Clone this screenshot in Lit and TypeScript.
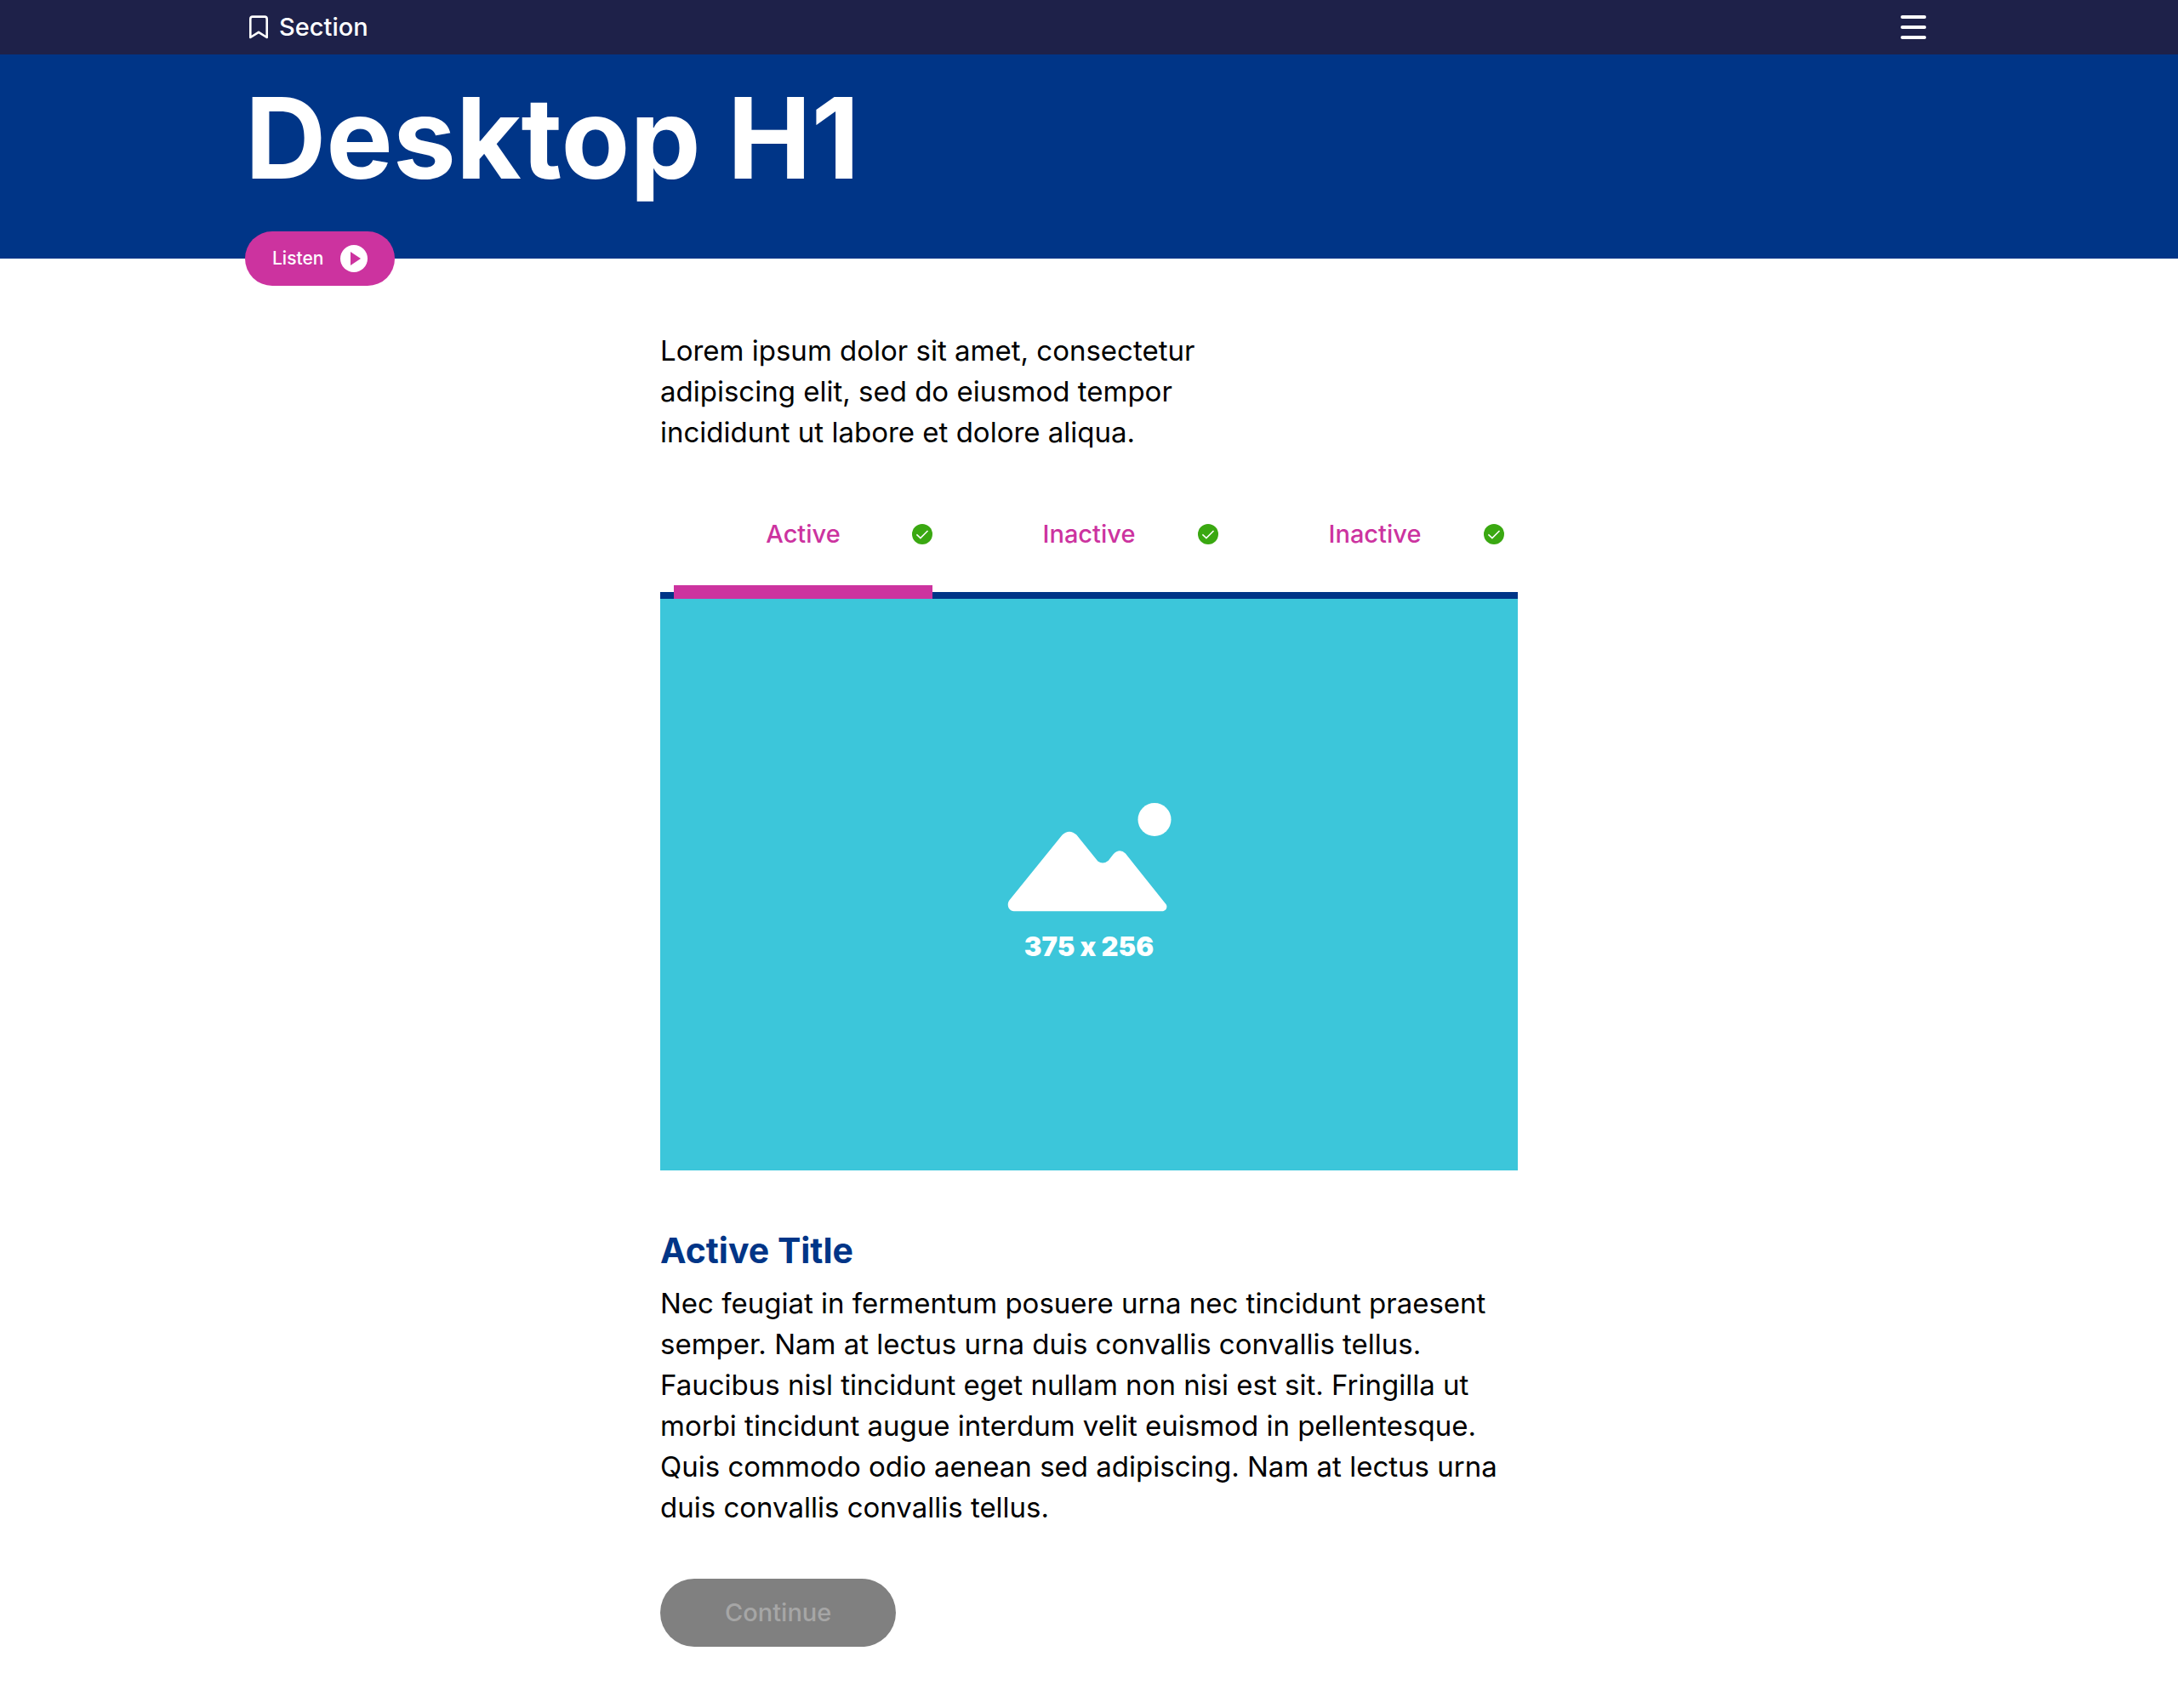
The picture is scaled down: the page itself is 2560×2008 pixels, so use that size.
import { LitElement, html, css, svg } from "lit";
import { customElement, property, state } from "lit/decorators.js";

interface TabItem {
  label: string;
  done: boolean;
}

const checkIcon = svg`
  <svg class="check" viewBox="0 0 24 24" aria-hidden="true">
    <circle cx="12" cy="12" r="12" fill="#3aa811" />
    <path d="M5.4 12.4 9.9 16.6 18.5 8" fill="none" stroke="#fff" stroke-width="1.5" />
  </svg>`;

@customElement("tab-strip")
export class TabStrip extends LitElement {
  @property({ attribute: false }) tabs: TabItem[] = [];
  @state() private selected = 0;

  static styles = css`
    :host {
      display: block;
    }
    .tabs {
      display: grid;
      grid-template-columns: repeat(3, 1fr);
      background: linear-gradient(#003587, #003587) bottom / 100% 8px no-repeat;
    }
    .tab {
      display: grid;
      grid-template-columns: 24px 1fr 24px;
      align-items: center;
      height: 136px;
      margin: 0 16px;
      padding: 0;
      border: 0;
      border-bottom: 16px solid transparent;
      background: none;
      color: #cc339f;
      font: 500 29px/40px Inter, "Liberation Sans", sans-serif;
      cursor: pointer;
    }
    .selected {
      border-bottom-color: #cc339f;
    }
    .label {
      grid-column: 2;
      text-align: center;
    }
    .check {
      display: block;
      width: 24px;
      height: 24px;
    }
  `;

  render() {
    return html`
      <div class="tabs" role="tablist">
        ${this.tabs.map(
          (tab, i) => html`
            <button
              class="tab ${i === this.selected ? "selected" : ""}"
              role="tab"
              aria-selected=${i === this.selected ? "true" : "false"}
              @click=${() => (this.selected = i)}
            >
              <span class="label">${tab.label}</span>
              ${tab.done ? checkIcon : null}
            </button>
          `
        )}
      </div>
    `;
  }
}

@customElement("app-root")
export class AppRoot extends LitElement {
  private tabs: TabItem[] = [
    { label: "Active", done: true },
    { label: "Inactive", done: true },
    { label: "Inactive", done: true },
  ];

  private intro = [
    "Lorem ipsum dolor sit amet, consectetur",
    "adipiscing elit, sed do eiusmod tempor",
    "incididunt ut labore et dolore aliqua.",
  ];

  private copy = [
    "Nec feugiat in fermentum posuere urna nec tincidunt praesent",
    "semper. Nam at lectus urna duis convallis convallis tellus.",
    "Faucibus nisl tincidunt eget nullam non nisi est sit. Fringilla ut",
    "morbi tincidunt augue interdum velit euismod in pellentesque.",
    "Quis commodo odio aenean sed adipiscing. Nam at lectus urna",
    "duis convallis convallis tellus.",
  ];

  static styles = css`
    :host {
      display: block;
      min-height: 100vh;
      background: #fff;
      color: #000;
      font-family: Inter, "Liberation Sans", sans-serif;
    }
    h1,
    h2,
    p {
      margin: 0;
    }
    button {
      font-family: inherit;
      border: 0;
    }
    .bar {
      display: flex;
      align-items: center;
      justify-content: space-between;
      height: 64px;
      padding: 0 288px;
      background: #1e2149;
    }
    .section {
      display: flex;
      align-items: center;
      gap: 8px;
      color: #fff;
      font-size: 29px;
      font-weight: 500;
      line-height: 40px;
      text-decoration: none;
    }
    .bookmark {
      width: 32px;
      height: 32px;
    }
    .menu {
      display: flex;
      padding: 0;
      background: none;
      cursor: pointer;
    }
    .menu-icon {
      width: 46px;
      height: 32px;
    }
    .hero {
      display: flex;
      flex-direction: column;
      align-items: flex-start;
      height: 240px;
      padding: 0 288px;
      background: #003587;
    }
    .title {
      padding: 18px 0 30px;
      color: #fff;
      font-size: 132px;
      font-weight: 700;
      line-height: 160px;
    }
    .listen {
      display: flex;
      flex: none;
      align-items: center;
      gap: 20px;
      height: 64px;
      padding: 0 32px;
      border-radius: 32px;
      background: #cc339f;
      color: #fff;
      font-size: 21px;
      font-weight: 500;
      line-height: 32px;
      cursor: pointer;
    }
    .play {
      width: 32px;
      height: 32px;
    }
    .content {
      display: flex;
      flex-direction: column;
      max-width: 1008px;
      margin: 0 auto;
      padding: 84px 0 72px;
    }
    .text {
      font-size: 33px;
      line-height: 48px;
    }
    .line {
      display: block;
      white-space: nowrap;
    }
    .panel {
      margin-top: 36px;
    }
    .picture {
      display: flex;
      flex-direction: column;
      align-items: center;
      justify-content: center;
      gap: 16px;
      aspect-ratio: 3 / 2;
      background: #3cc6da;
      color: #fff;
      font-size: 31px;
      font-weight: 900;
      line-height: 48px;
      font-variant-ligatures: no-contextual;
    }
    .landscape {
      width: 194px;
      height: 130px;
    }
    .subtitle {
      padding: 66px 0 10px;
      color: #003587;
      font-size: 41px;
      font-weight: 700;
      line-height: 56px;
    }
    .continue {
      align-self: flex-start;
      height: 80px;
      margin-top: 60px;
      padding: 0 76px;
      border-radius: 40px;
      background: #808080;
      color: #a6a6a6;
      font-size: 29px;
      font-weight: 500;
      line-height: 40px;
    }
  `;

  private lines(items: string[]) {
    return items.map((line) => html`<span class="line">${line} </span>`);
  }

  render() {
    return html`
      <header>
        <nav class="bar">
          <a class="section" href="#section">
            <svg class="bookmark" viewBox="0 0 32 32" aria-hidden="true">
              <path
                d="M6.3 28V6.2Q6.3 3.6 8.9 3.6H23.1Q25.7 3.6 25.7 6.2V28L16 21.8Z"
                fill="none" stroke="#fff" stroke-width="2.6" stroke-linejoin="round"
              />
            </svg>
            Section
          </a>
          <button class="menu" aria-label="Menu">
            <svg class="menu-icon" viewBox="0 0 46 32" aria-hidden="true">
              <path d="M10 4H36M10 16H36M10 28H36" stroke="#fff" stroke-width="4" stroke-linecap="round" />
            </svg>
          </button>
        </nav>
        <div class="hero">
          <h1 class="title">Desktop H1</h1>
          <button class="listen">
            Listen
            <svg class="play" viewBox="0 0 32 32" aria-hidden="true">
              <circle cx="16" cy="16" r="16" fill="#fff" />
              <path d="M12 8V24L24 16Z" fill="#cc339f" />
            </svg>
          </button>
        </div>
      </header>
      <main class="content">
        <p class="text">${this.lines(this.intro)}</p>
        <tab-strip class="panel" .tabs=${this.tabs}></tab-strip>
        <div class="picture">
          <svg class="landscape" viewBox="-1 0 194 130" aria-hidden="true">
            <circle cx="173" cy="20.5" r="19.5" fill="#fff" />
            <path
              d="M2.5 115.2 64.4 38.8Q72.8 30.6 81.4 38.6L106.4 69.6Q112.6 74 118.8 68.8L124.4 61.4Q132 53.6 139 60.6L185.4 118.8C189.6 122.6 186.6 128.2 182 128.2H7.6C1.6 128.2-1.4 120.4 2.5 115.2Z"
              fill="#fff"
            />
          </svg>
          <span>375 x 256</span>
        </div>
        <h2 class="subtitle">Active Title</h2>
        <p class="text">${this.lines(this.copy)}</p>
        <button class="continue" disabled>Continue</button>
      </main>
    `;
  }
}
